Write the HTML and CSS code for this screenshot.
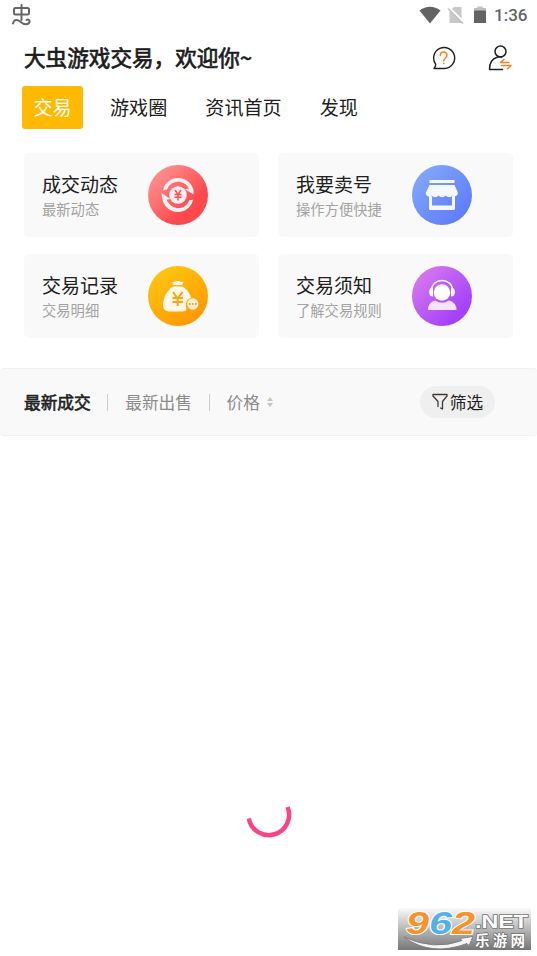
FILE: index.html
```html
<!DOCTYPE html>
<html lang="zh-CN">
<head>
<meta charset="utf-8">
<title>大虫游戏交易</title>
<link rel="stylesheet" href="styles.css">
</head>
<body>
<div class="status">
  <svg class="bug" width="22" height="24" viewBox="0 0 22 24" fill="none" stroke="#666" stroke-width="2" stroke-linecap="round" stroke-linejoin="round"><rect x="4" y="5" width="15" height="6.500" rx="1.500"/><path d="M11.500 2V17M3 20.500c1-4 4-4.500 7-2s6.500 4 9 1.500c1.500-2-.5-4.500-2.500-3"/></svg>
  <div class="status-right">
    <svg width="22" height="18" viewBox="0 0 22 18"><path d="M.5 4.500Q11-3 21.500 4.500L11 17.500z" fill="#636363"/></svg>
    <svg width="18" height="18" viewBox="0 0 18 18"><path d="M7 1h7.500v16h-12V5.500z" fill="#c8c8c8"/><path d="M1.500 1.500l15 15" stroke="#fff" stroke-width="3"/><path d="M1 2.500l15 15" stroke="#bbb" stroke-width="1.300"/></svg>
    <svg width="12" height="18" viewBox="0 0 12 18"><path d="M3.500.5h5V2H12v3H0V2h3.500z" fill="#bdbdbd"/><path d="M0 4.500h12V17H0z" fill="#636363"/></svg>
    <span class="clock">1:36</span>
  </div>
</div>
<header class="header">
  <h1>大虫游戏交易，欢迎你~</h1>
  <div class="actions">
    <svg width="24" height="24" viewBox="0 0 24 24" fill="none" stroke="#202020" stroke-width="1.400" stroke-linejoin="round" stroke-linecap="round"><path d="M2 22.500h10.500A10.500 10.500 0 1 0 3.700 18.200Q3.800 20.500 2 22.500z"/><path d="M8.300 9.500C8.300 5 15 5 15 9.300c0 2.700-3.300 2.700-3.300 5.700M11.700 17.200v.4" stroke="#f58220" stroke-width="1.500"/></svg>
    <svg width="24" height="26" viewBox="0 0 24 26" fill="none" stroke="#202020" stroke-width="1.500" stroke-linejoin="round" stroke-linecap="round"><circle cx="12.500" cy="6.500" r="5.500"/><path d="M8.500 12.500C4 14 1.500 18 1.500 24.500h13M8.500 12.500q2.500-1 5-.5"/><path d="M21 17.500h-8.500l3.500-3M13.500 20.500H23l-3.500 3.300" stroke="#f58220" stroke-width="1.500"/></svg>
  </div>
</header>
<nav class="tabs">
  <a class="tab active">交易</a><a class="tab">游戏圈</a><a class="tab">资讯首页</a><a class="tab">发现</a>
</nav>
<main>
  <section class="cards">
    <div class="card">
      <div class="label"><h2>成交动态</h2><p>最新动态</p></div>
      <svg class="icon" viewBox="0 0 60 60"><defs><linearGradient id="red" x1="0" y1="0" x2="1" y2="1"><stop offset=".1" stop-color="#fe9494"/><stop offset=".7" stop-color="#fd484c"/></linearGradient></defs><circle cx="30" cy="30" r="30" fill="url(#red)"/>
        <g fill="#fff0ef"><path d="M15 25.500C18 9.500 41 8.500 45.500 25v4.500L36.500 24l4.500-.5C36 13.500 22 15 19 24.500z"/><path d="M45 34.500C42 50.500 19 51.500 14.500 35l-1.200-7L22.500 34l-3.800.8C24 46.500 38 45 41 35.500z"/><circle cx="30" cy="30" r="8.800"/></g><path d="M27 25l3 4.500 3-4.500M30 29.500V35.500M26.500 29.500h7M26.500 32.300h7" fill="none" stroke="#fd5355" stroke-width="1.500"/></svg>
    </div>
    <div class="card">
      <div class="label"><h2>我要卖号</h2><p>操作方便快捷</p></div>
      <svg class="icon" viewBox="0 0 60 60"><defs><linearGradient id="blue" x1="0" y1="0" x2="1" y2="1"><stop offset=".1" stop-color="#83a8fb"/><stop offset=".9" stop-color="#5d79fc"/></linearGradient></defs><circle cx="30" cy="30" r="30" fill="url(#blue)"/>
        <g fill="#f6f8ff"><rect x="17.500" y="15" width="25" height="3" rx=".6"/><path d="M17.500 20h25l3.300 7.500c.5 3-2.800 5-5.200 3-2 2.300-5 2.200-7 0-2 2.200-5 2.200-7 0-2 2.200-5 2.200-7 0-2.500 2-6.500.5-5.700-3z"/><path d="M17 31h3v9.500h20V31h3v12.500q0 1.500-1.500 1.500h-23q-1.500 0-1.500-1.500z"/></g></svg>
    </div>
    <div class="card">
      <div class="label"><h2>交易记录</h2><p>交易明细</p></div>
      <svg class="icon" viewBox="0 0 60 60"><defs><linearGradient id="gold" x1=".1" y1="0" x2=".8" y2="1"><stop offset="0" stop-color="#ffcb12"/><stop offset="1" stop-color="#ff9500"/></linearGradient></defs><circle cx="30" cy="30" r="30" fill="url(#gold)"/>
        <path d="M24 15.500q1.500 1 3 0 2.500-1 5 0 2 .8 3.500 0l-1.500 3.500h-8.500z" fill="#fff"/><path d="M25 20.500h9.500c5.500 3.500 8 8 8.500 11.500-4 1-6.500 5-4.500 11-.5 1.800-2 2.500-4.500 2.500H22c-4.500 0-7-2.500-7-6.500 0-7.500 4.500-15 10-18.500z" fill="#fff7e8"/><path d="M25 26l4.700 6.500L34.500 26M29.700 32.500V40M24.500 32h10.500M24.500 36h10.500" fill="none" stroke="#ffa20c" stroke-width="2"/><circle cx="44.800" cy="38" r="5.700" fill="#fff0d9"/><g fill="#ff9a0a"><circle cx="41.800" cy="38" r="1"/><circle cx="44.800" cy="38" r="1"/><circle cx="47.800" cy="38" r="1"/></g></svg>
    </div>
    <div class="card">
      <div class="label"><h2>交易须知</h2><p>了解交易规则</p></div>
      <svg class="icon" viewBox="0 0 60 60"><defs><linearGradient id="violet" x1="0" y1="0" x2="1" y2="1"><stop offset=".1" stop-color="#d879ee"/><stop offset=".8" stop-color="#a441fb"/></linearGradient></defs><circle cx="30" cy="30" r="30" fill="url(#violet)"/>
        <circle cx="30" cy="26.500" r="8.300" fill="#fff"/><path d="M19 25C20 11 40 11 41 25" fill="none" stroke="#fff" stroke-width="1.400"/><path d="M21 21.500v9q-3.800 0-3.800-4.500t3.800-4.500zM39 21.500v9q3.800 0 3.800-4.500t-3.800-4.500z" fill="#fff"/><path d="M16 44q0-7.500 7-9.500 7 4.500 14 0 7.500 2 7.500 9.500z" fill="#f4e4ff"/></svg>
    </div>
  </section>
  <section class="filterbar">
    <span class="sort current">最新成交</span><i></i><span class="sort">最新出售</span><i></i><span class="sort">价格</span>
    <svg class="arrows" width="6" height="10" viewBox="0 0 6 10"><path d="M0 4l3-4 3 4zM0 6l3 4 3-4z" fill="#c4c4c4"/></svg>
    <button class="filter"><svg width="16" height="18" viewBox="0 0 16 18" fill="none" stroke="#403a36" stroke-width="1.300" stroke-linejoin="round" stroke-linecap="round"><path d="M6 13.500V8.500L1 3V1.500h14V3l-4.500 5.500V16L8.500 15"/></svg>筛选</button>
  </section>
  <section class="loading">
    <svg width="46" height="46" viewBox="0 0 46 46" fill="none" stroke="#f9448a" stroke-width="4.500"><path d="M2.800 24.500A20.300 20.300 0 1 0 41.500 13"/></svg>
  </section>
</main>
<svg class="watermark" width="133" height="42" viewBox="0 0 133 42">
  <defs><linearGradient id="shade" x1="0" y1="0" x2="0" y2="1"><stop offset="0" stop-color="#fafafa"/><stop offset=".5" stop-color="#b8b8b8"/><stop offset="1" stop-color="#777"/></linearGradient></defs>
  <path d="M0 0h133v42H0z" fill="url(#shade)"/>
  <path d="M6 29q30 14 58 3.500l-2-2L75 28.500l-4 9-2-2Q33 49 6 29z" fill="#f4f4f4" stroke="#777" stroke-width=".8"/>
  <text class="digits" x="8" y="25.500" textLength="69" lengthAdjust="spacingAndGlyphs"><tspan>9</tspan><tspan class="mid">6</tspan><tspan>2</tspan></text>
  <text class="net" x="77" y="19.500" textLength="53" lengthAdjust="spacingAndGlyphs">.NET</text>
  <text class="site" x="77" y="37.500" textLength="50" lengthAdjust="spacing">乐游网</text>
</svg>
</body>
</html>
```
FILE: styles.css
```css
* { box-sizing: border-box; }
body {
  margin: 0;
  height: 956px;
  overflow: hidden;
  background: #fff;
  color: #202020;
  font-family: "Noto Sans CJK SC", sans-serif;
}
svg { display: block; flex: none; }
h1, h2, p { margin: 0; }
.status {
  display: flex;
  justify-content: space-between;
  height: 32px;
  padding: 3px 9.500px 0 10px;
}
.status-right { display: flex; height: 24px; align-items: center; }
.status-right svg + svg { margin-left: 6px; }
.status-right svg:nth-child(3) { margin-left: 9px; }
.clock {
  margin-left: 8px;
  font: 500 17px/24px Roboto, sans-serif;
  color: #636363;
}
.header {
  display: flex;
  align-items: center;
  justify-content: space-between;
  height: 52px;
  padding: 0 25px 0 24px;
}
h1 {
  margin-top: -2px;
  font-size: 21.600px;
  line-height: 32px;
  font-weight: 400;
  color: #1b1b1b;
  white-space: nowrap;
  -webkit-text-stroke: .7px #1b1b1b;
}
.actions { display: flex; align-items: center; gap: 32px; }
.tabs { display: flex; height: 69px; padding: 2px 0 0 22px; }
.tab { height: 43px; margin-right: 38px; font-size: 19.100px; line-height: 42px; }
.tab.active {
  width: 61px;
  margin-right: 27px;
  border-radius: 3px;
  background: #ffba00;
  color: #fff;
  text-align: center;
}
.cards {
  display: grid;
  grid-template-columns: 235px 235px;
  grid-auto-rows: 84px;
  gap: 17px 19px;
  padding-left: 24px;
}
.card { display: flex; padding: 17px 0 0 18px; border-radius: 5px; background: #f9f9f9; }
.label { width: 106px; white-space: nowrap; }
.card:nth-child(even) .label { width: 115.500px; }
h2 { font-size: 19px; line-height: 28px; font-weight: 400; }
p { font-size: 14.300px; line-height: 22px; color: #a3a3a3; }
.icon { width: 60px; height: 60px; margin-top: -5px; }
.filterbar {
  display: flex;
  align-items: center;
  height: 68px;
  margin-top: 30px;
  padding: 0 42px 0 24px;
  border: 1px solid #f1f1f1;
  border-width: 1px 0;
  border-radius: 4px;
  background: #f9f9f9;
}
.sort { font-size: 16.700px; line-height: 24px; color: #8b8b8b; }
.sort.current { color: #222; -webkit-text-stroke: .6px #222; }
.filterbar i { width: 1px; height: 17px; margin: 0 17px 0 16.500px; background: #ccc; }
.arrows { margin-left: 7px; }
.filter {
  display: flex;
  align-items: center;
  justify-content: center;
  gap: 2px;
  width: 75px;
  height: 32px;
  margin-left: auto;
  padding: 0;
  border: 0;
  border-radius: 16px;
  background: #efefef;
  color: #222;
  font: 16.700px/32px "Noto Sans CJK SC", sans-serif;
}
.loading { display: flex; justify-content: center; padding-top: 358px; }
.watermark { position: absolute; left: 398px; top: 908px; overflow: visible; }
.digits { font: italic 700 32px "Liberation Sans", sans-serif; fill: #f7922d; stroke: #fff; stroke-width: 2px; paint-order: stroke; }
.digits .mid { fill: #54b1e8; }
.net { font: 700 18.500px "Liberation Sans", sans-serif; fill: #fff; stroke: #777; stroke-width: 1.500px; paint-order: stroke; }
.site { font: 700 14.500px "Noto Sans CJK SC", sans-serif; fill: #fff; stroke: #707070; stroke-width: 1.500px; paint-order: stroke; }
```
